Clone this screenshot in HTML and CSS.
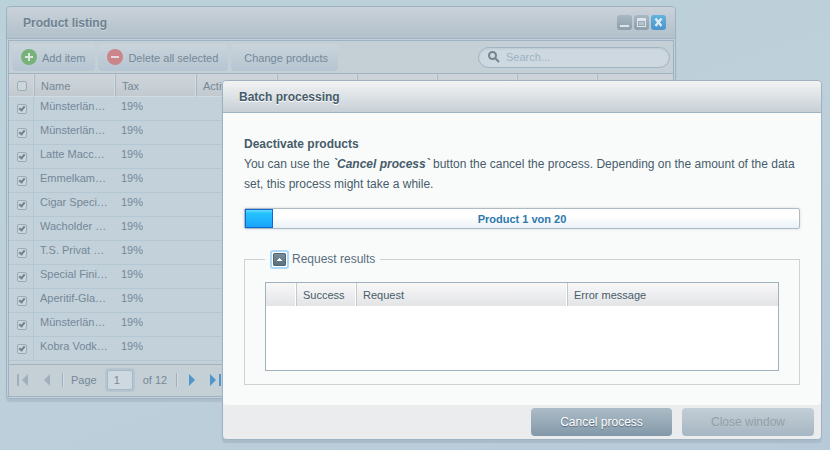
FILE: index.html
```html
<!DOCTYPE html>
<html lang="en">
<head>
<meta charset="utf-8">
<title>Product listing</title>
<link rel="stylesheet" href="styles.css">
</head>
<body>
<section class="window listing">
  <header class="window-header">
    <h1>Product listing</h1>
    <div class="tools">
      <button type="button" class="tool" aria-label="Minimize"><svg viewBox="0 0 15 15"><path d="M3 10h9v2H3z" fill="#dbe5eb"/></svg></button>
      <button type="button" class="tool" aria-label="Maximize"><svg viewBox="0 0 15 15"><path fill-rule="evenodd" d="M3 3h9v9H3zM4 6v5h7V6z" fill="#dbe5eb"/><path d="M5 7h5v3H5z" fill="#b4c3cc"/></svg></button>
      <button type="button" class="tool tool-close" aria-label="Close"><svg viewBox="0 0 15 15"><path d="M4.500 3.500l6 7.500M10.500 3.500l-6 7.500" fill="none" stroke="#dcebf4" stroke-width="2.400"/></svg></button>
    </div>
  </header>
  <div class="listing-body">
    <div class="toolbar">
      <button type="button" class="tb-button"><svg class="tb-icon" viewBox="0 0 16 16"><circle cx="8" cy="8" r="8" fill="#76b27a"/><path d="M7 4h2v3h3v2H9v3H7V9H4V7h3z" fill="#d9e7e0"/></svg>Add item</button>
      <button type="button" class="tb-button"><svg class="tb-icon" viewBox="0 0 16 16"><circle cx="8" cy="8" r="8" fill="#cb858a"/><path d="M4 7h8v2H4z" fill="#e2dade"/></svg>Delete all selected</button>
      <button type="button" class="tb-button tb-plain">Change products</button>
      <label class="search">
        <svg viewBox="0 0 12 12"><circle cx="4.500" cy="4.500" r="3.500" fill="none" stroke="#71848f" stroke-width="2"/><path d="M7 7l4 4" stroke="#71848f" stroke-width="2"/></svg>
        <input type="search" placeholder="Search..." aria-label="Search">
      </label>
    </div>
    <table class="grid products">
      <colgroup><col class="c-check"><col class="c-wide"><col class="c-wide"><col class="c-wide"><col class="c-std"><col class="c-std"><col class="c-std"><col class="c-std"><col></colgroup>
      <thead><tr><th><input type="checkbox" aria-label="Select all"></th><th>Name</th><th>Tax</th><th>Active</th><th></th><th></th><th></th><th></th><th></th></tr></thead>
      <tbody>
        <tr><td><input type="checkbox" checked aria-label="Select row"></td><td>Münsterlän…</td><td>19%</td><td colspan="6"></td></tr>
        <tr><td><input type="checkbox" checked aria-label="Select row"></td><td>Münsterlän…</td><td>19%</td><td colspan="6"></td></tr>
        <tr><td><input type="checkbox" checked aria-label="Select row"></td><td>Latte Macc…</td><td>19%</td><td colspan="6"></td></tr>
        <tr><td><input type="checkbox" checked aria-label="Select row"></td><td>Emmelkam…</td><td>19%</td><td colspan="6"></td></tr>
        <tr><td><input type="checkbox" checked aria-label="Select row"></td><td>Cigar Speci…</td><td>19%</td><td colspan="6"></td></tr>
        <tr><td><input type="checkbox" checked aria-label="Select row"></td><td>Wacholder …</td><td>19%</td><td colspan="6"></td></tr>
        <tr><td><input type="checkbox" checked aria-label="Select row"></td><td>T.S. Privat …</td><td>19%</td><td colspan="6"></td></tr>
        <tr><td><input type="checkbox" checked aria-label="Select row"></td><td>Special Fini…</td><td>19%</td><td colspan="6"></td></tr>
        <tr><td><input type="checkbox" checked aria-label="Select row"></td><td>Aperitif-Gla…</td><td>19%</td><td colspan="6"></td></tr>
        <tr><td><input type="checkbox" checked aria-label="Select row"></td><td>Münsterlän…</td><td>19%</td><td colspan="6"></td></tr>
        <tr><td><input type="checkbox" checked aria-label="Select row"></td><td>Kobra Vodk…</td><td>19%</td><td colspan="6"></td></tr>
      </tbody>
    </table>
    <nav class="pager">
      <button type="button" class="page-first" aria-label="First page" disabled><svg viewBox="0 0 12 12"><path d="M0 0h2v12H0zM11 0v12L5 6z"/></svg></button>
      <button type="button" class="page-prev" aria-label="Previous page" disabled><svg viewBox="0 0 12 12"><path d="M11 0v12L5 6z"/></svg></button>
      <span class="divider"></span>
      <label for="page">Page</label>
      <input id="page" type="text" value="1">
      <span class="page-total">of 12</span>
      <span class="divider"></span>
      <button type="button" class="page-next" aria-label="Next page"><svg viewBox="0 0 12 12"><path d="M1 0v12l6-6z"/></svg></button>
      <button type="button" class="page-last" aria-label="Last page"><svg viewBox="0 0 12 12"><path d="M0 0v12l6-6zM9 0h2v12H9z"/></svg></button>
    </nav>
  </div>
</section>

<section class="window batch" role="dialog" aria-labelledby="batch-title">
  <header class="window-header">
    <h2 id="batch-title">Batch processing</h2>
  </header>
  <div class="batch-body">
    <div class="intro">
      <h3>Deactivate products</h3>
      <p>You can use the <strong>`Cancel process`</strong> button the cancel the process. Depending on the amount of the data set, this process might take a while.</p>
    </div>
    <div class="progress" role="progressbar" aria-valuemin="0" aria-valuemax="20" aria-valuenow="1">
      <div class="progress-bar" style="width: 5%"></div>
      <span class="progress-text">Product 1 von 20</span>
    </div>
    <fieldset>
      <legend><button type="button" class="toggle" aria-label="Collapse"><svg viewBox="0 0 13 13"><path d="M4 8h5V7H8V6H7V5H6v1H5v1H4z" fill="#fff"/></svg></button>Request results</legend>
      <div class="results-box">
        <table class="grid results">
          <colgroup><col class="r-index"><col class="r-success"><col class="r-request"><col></colgroup>
          <thead><tr><th></th><th>Success</th><th>Request</th><th>Error message</th></tr></thead>
        </table>
      </div>
    </fieldset>
  </div>
  <footer>
    <button type="button" class="action">Cancel process</button>
    <button type="button" class="action action-close" disabled>Close window</button>
  </footer>
</section>
</body>
</html>
```
FILE: styles.css
```css
* { box-sizing: border-box; }

body {
  margin: 0;
  min-height: 100vh;
  background: linear-gradient(160deg, #bad1da, #bed0da 50%, #b7cad9);
  font: 11px/14px "Liberation Sans", Arial, sans-serif;
  color: #475c6a;
}

button, input { font: inherit; color: inherit; }
button { padding: 0; border: 0; background: none; }
svg { display: block; }
h1, h2, h3, p { margin: 0; font-size: 12px; }

.window {
  position: absolute;
  border: 1px solid #9fb2c1;
  border-radius: 4px;
}

.window-header {
  display: flex;
  align-items: center;
  justify-content: space-between;
  height: 32px;
  padding: 0 9px 0 16px;
  border-bottom: 1px solid #9fb2c1;
  border-radius: 4px 4px 0 0;
}

/* Product listing */
.listing {
  top: 6px;
  left: 6px;
  right: 154px;
  padding-bottom: 1px;
  background: #c4d0dc;
  box-shadow: 0 3px 1px #aebfcb;
  color: #748897;
}
.listing .window-header { background: linear-gradient(#cad2d9, #b1c0ca); }
.listing h1 { color: #6f8290; text-shadow: 0 1px 0 #d3dce1; }

.tools { display: flex; gap: 2px; }
.tool {
  width: 15px;
  height: 15px;
  border-radius: 3px;
  background: linear-gradient(#a8b8c2, #8d9fac);
}
.tool-close { background: linear-gradient(#62b3dd, #4a93cb); }

.listing-body {
  margin: 1px 1px 0;
  border: 1px solid #9fb2c1;
  background: #c5d0d6;
}

.toolbar {
  display: flex;
  align-items: center;
  gap: 3px;
  height: 33px;
  padding: 0 3px;
  border-bottom: 1px solid #9fb2c1;
}
.tb-button {
  display: flex;
  align-items: center;
  gap: 5px;
  height: 27px;
  padding: 1px 10px 0 9px;
  border-radius: 4px;
  background: linear-gradient(#cad4db, #b5c5d2);
}
.tb-icon { width: 16px; height: 16px; margin-bottom: 2px; }
.tb-plain { padding: 1px 10px 0 13px; }

.search {
  display: flex;
  align-items: center;
  gap: 6px;
  width: 192px;
  height: 21px;
  margin-left: auto;
  padding: 0 9px;
  border: 1px solid #9fb5c3;
  border-radius: 11px;
  background: #ced8e0;
  box-shadow: inset 0 1px 2px #bccad4;
}
.search svg { flex: none; width: 12px; height: 12px; }
.search input {
  flex: 1;
  min-width: 0;
  padding: 0;
  border: 0;
  outline: 0;
  background: none;
}
.search input::placeholder { color: #9db3c4; opacity: 1; }

.grid {
  width: 100%;
  table-layout: fixed;
  border-collapse: separate;
  border-spacing: 0;
}
.grid th {
  height: 23px;
  padding: 1px 6px 0;
  overflow: hidden;
  font-weight: normal;
  text-align: left;
}

.c-check { width: 25px; }
.c-wide { width: 81px; }
.c-std { width: 80px; }
.products th {
  border-right: 1px solid #d2dbe2;
  border-bottom: 1px solid #d2dbe2;
  background: linear-gradient(#ced5da, #c2cad0);
}
.products th + th { border-left: 1px solid #a9b9c4; }
.products th:last-child { border-right: 0; }
.products td {
  height: 24px;
  padding: 0 6px 5px;
  overflow: hidden;
  border-bottom: 1px solid #b4c7d5;
  background: #c3d1db;
  white-space: nowrap;
}
.products td:first-child { border-right: 1px solid #b4c7d5; }
.products th:first-child { padding: 1px 0 0 8px; }
.products td:first-child { padding: 0 0 0 8px; }

.products input {
  position: relative;
  display: block;
  appearance: none;
  width: 10px;
  height: 10px;
  margin: 0;
  border: 1px solid #9dabb5;
  border-radius: 2px;
  background: #cbd5dc;
}
.products input:checked::after {
  content: "";
  position: absolute;
  top: 0;
  left: 2px;
  width: 2px;
  height: 4px;
  border: solid #71828f;
  border-width: 0 2px 2px 0;
  transform: rotate(40deg);
}

.pager {
  display: flex;
  align-items: center;
  height: 32px;
  margin-top: 3px;
  padding: 0 0 1px 8px;
  border-top: 1px solid #9fb2c1;
}
.pager button { width: 12px; height: 12px; }
.pager button svg { width: 12px; height: 12px; fill: #4d97cb; }
.pager button:disabled svg { fill: #9fb0bc; }
.page-prev { margin: 0 11px 0 10px; }
.divider {
  width: 2px;
  height: 14px;
  border-left: 1px solid #9fb0bc;
  border-right: 1px solid #d2dbe1;
}
.pager label { margin: 0 10px 0 7px; }
.pager input {
  width: 26px;
  height: 20px;
  padding: 0 6px;
  border: 1px solid #a6b6c2;
  border-radius: 2px;
  outline: 2px solid #b6c6d1;
  background: #ced8e0;
}
.page-total { margin: 0 9px 0 10px; }
.page-next { margin: 0 10px; }

/* Batch processing */
.batch {
  top: 80px;
  left: 222px;
  right: 8px;
  background: #ebecee;
  box-shadow: 0 3px 1px #a9bbc8;
}
.batch .window-header { background: linear-gradient(#f2f3f3, #c7d0d7); }
.batch h2 { color: #475c6a; text-shadow: 0 1px 0 #fff; }
.batch-body {
  padding: 21px;
  padding-bottom: 20px;
  border-radius: 0 0 4px 4px;
  background: #f9fbfa;
  font-size: 12px;
  line-height: 20px;
}
.intro { margin-right: -2px; }
.intro p, .intro h3 { line-height: 20px; }
.intro strong { font-style: italic; }

.progress {
  position: relative;
  height: 21px;
  margin-top: 14px;
  border: 1px solid #aebbc3;
  border-radius: 2px;
  background: linear-gradient(#fff 40%, #eaf1f6);
  box-shadow: 0 0 3px #d4dadd;
}
.progress-bar {
  height: 100%;
  border: 1px solid #1067d3;
  background: linear-gradient(#68dcff, #24c2ff 20%, #1ba4fb);
}
.progress-text {
  position: absolute;
  inset: 0;
  color: #2d78ad;
  font-size: 11px;
  font-weight: bold;
  text-align: center;
}

fieldset {
  min-width: 0;
  margin: 20px 0 0;
  padding: 13px 20px;
  border: 1px solid #cdd2d5;
}
legend {
  display: flex;
  align-items: center;
  gap: 3px;
  padding: 0 5px;
  color: #5a6e7e;
}
.toggle {
  width: 19px;
  height: 19px;
  padding: 1px;
  border: 2px solid #add8f7;
  border-radius: 3px;
  background: #fff;
}
.toggle svg {
  border-radius: 2px;
  outline: 1px solid #526573;
  outline-offset: -1px;
  background: linear-gradient(#7b8e9c, #5b6e7c);
}

.results-box {
  min-height: 89px;
  border: 1px solid #a0b1bd;
  background: #fff;
  font-size: 11px;
  line-height: 14px;
}
.r-index { width: 30px; }
.r-success { width: 60px; }
.r-request { width: 211px; }
.results th {
  border-right: 1px solid #fff;
  background: linear-gradient(#f8f8f9, #e3e4e6);
}
.results th + th { border-left: 1px solid #c3c9cd; }
.results th:last-child { border-right: 0; }

footer {
  display: flex;
  justify-content: flex-end;
  gap: 10px;
  padding: 3px 7px;
}
.action {
  min-width: 141px;
  height: 28px;
  border-radius: 4px;
  background: linear-gradient(#acbcc7, #8298a8);
  color: #fff;
  font-size: 12px;
  text-shadow: 0 1px 1px #56697a;
}
.action-close {
  min-width: 132px;
  background: linear-gradient(#c3ced6, #a6b6c3);
  color: #929fa9;
  text-shadow: 0 1px 0 #b9c5cd;
}
```
